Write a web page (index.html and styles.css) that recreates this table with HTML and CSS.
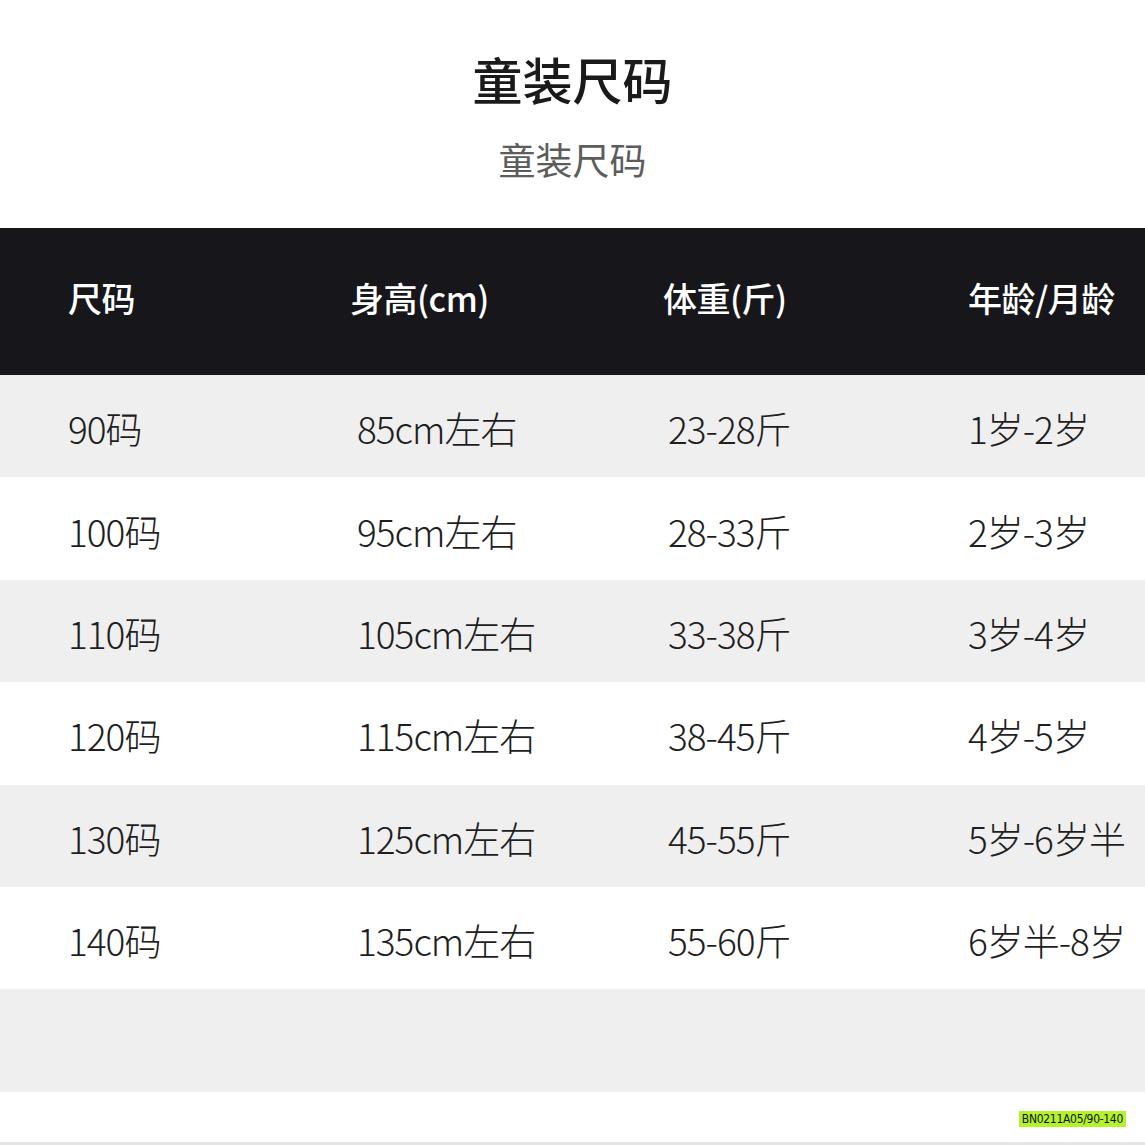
FILE: index.html
```html
<!DOCTYPE html>
<html lang="zh-CN">
<head>
<meta charset="utf-8">
<title>童装尺码</title>
<link rel="stylesheet" href="styles.css">
</head>
<body>
<div class="page">
  <header class="heading">
    <h1 class="title">童装尺码</h1>
    <p class="subtitle">童装尺码</p>
  </header>
  <div class="table">
    <div class="thead">
      <div>尺码</div><div>身高(cm)</div><div>体重(斤)</div><div>年龄/月龄</div>
    </div>
    <div class="row alt"><div>90码</div><div>85cm左右</div><div>23-28斤</div><div>1岁-2岁</div></div>
    <div class="row"><div>100码</div><div>95cm左右</div><div>28-33斤</div><div>2岁-3岁</div></div>
    <div class="row alt"><div>110码</div><div>105cm左右</div><div>33-38斤</div><div>3岁-4岁</div></div>
    <div class="row"><div>120码</div><div>115cm左右</div><div>38-45斤</div><div>4岁-5岁</div></div>
    <div class="row alt"><div>130码</div><div>125cm左右</div><div>45-55斤</div><div>5岁-6岁半</div></div>
    <div class="row"><div>140码</div><div>135cm左右</div><div>55-60斤</div><div>6岁半-8岁</div></div>
    <div class="row alt empty"></div>
  </div>
  <footer class="foot">
    <span class="tag">BN0211A05/90-140</span>
  </footer>
</div>
</body>
</html>
```

FILE: styles.css
```css
html, body {
  margin: 0;
  padding: 0;
  background: #ffffff;
}
body {
  font-family: "Noto Sans CJK SC", "Noto Sans", sans-serif;
  color: #222;
}
.page {
  width: 1145px;
  height: 1145px;
  display: flex;
  flex-direction: column;
  overflow: hidden;
}
.heading {
  height: 228px;
  display: flex;
  flex-direction: column;
  align-items: center;
  box-sizing: border-box;
  padding-top: 45px;
}
.title {
  margin: 0;
  font-size: 50px;
  line-height: 66px;
  font-weight: 500;
  color: #1a1a1a;
  letter-spacing: 0;
}
.subtitle {
  margin: 23px 0 0 0;
  font-size: 37px;
  line-height: 50px;
  font-weight: 400;
  color: #5c5c5c;
}
.table {
  display: flex;
  flex-direction: column;
}
.thead {
  height: 147px;
  background: #16161b;
  color: #ffffff;
  display: grid;
  grid-template-columns: 282px 313px 305px 1fr;
  align-items: center;
  padding-left: 68px;
  padding-bottom: 8px;
  box-sizing: border-box;
  font-size: 34px;
  font-weight: 500;
  letter-spacing: -0.5px;
}
.row {
  height: 102.4px;
  display: grid;
  grid-template-columns: 289px 311px 300px 1fr;
  align-items: center;
  padding-left: 68px;
  padding-top: 4px;
  box-sizing: border-box;
  font-size: 37px;
  font-weight: 300;
  color: #1e1e1e;
  letter-spacing: -1px;
  background: #ffffff;
}
.row.alt {
  background: #efefef;
}
.foot {
  flex: 1;
  display: flex;
  justify-content: flex-end;
  align-items: flex-start;
  padding: 19px 19px 0 0;
  border-bottom: 3px solid #e6e6e6;
}
.tag {
  background: #b4f32a;
  color: #111;
  font-family: "DejaVu Sans Condensed", "DejaVu Sans", sans-serif;
  font-size: 12px;
  line-height: 16px;
  padding: 0 3px;
  letter-spacing: -0.3px;
}
```
